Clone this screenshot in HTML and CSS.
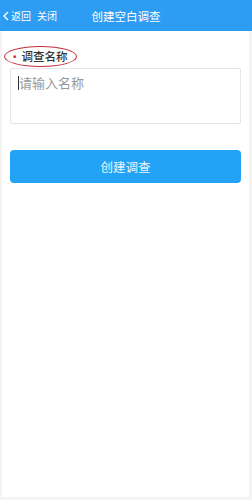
FILE: index.html
```html
<!DOCTYPE html>
<html lang="zh-CN">
  <head>
    <meta charset="UTF-8" />
    <title>创建空白调查</title>
    <link rel="stylesheet" href="styles.css">
  </head>
  <body>
    <div class="page">
      <!-- 顶部栏 -->
      <div class="topbar">
        <div class="nav-left">
          <svg class="back-icon" width="6" height="10" viewBox="0 0 6 10">
            <path d="M5 1 L1 5 L5 9" fill="none" stroke="#fff" stroke-width="1.4" />
          </svg>
          <span>返回</span>
          <span class="close">关闭</span>
        </div>
        <div class="title">创建空白调查</div>
      </div>

      <div class="form">
        <div class="label">
          <span class="dot">•</span>调查名称
        </div>
        <div class="name-box">
          <span class="caret"></span><span class="placeholder">请输入名称</span>
        </div>
        <button class="create-btn">创建调查</button>
      </div>
    </div>
  </body>
</html>
```

FILE: styles.css
```css
body {
  margin: 0;
  font-family: "Noto Sans CJK SC", "Noto Sans", sans-serif;
  background: #f4f4f4;
}

.page {
  margin: 0 3px 0 2px;
  height: 497px;
  background: #fff;
}

.topbar {
  height: 31px;
  background: #2c9df2;
  color: #fff;
  display: flex;
  align-items: center;
  position: relative;
  margin-left: -2px;
  margin-right: -3px;
}

.nav-left {
  display: flex;
  align-items: center;
  font-size: 10px;
  padding-left: 3px;
}

.back-icon {
  margin-right: 2px;
}

.close {
  margin-left: 6px;
}

.title {
  position: absolute;
  left: 0;
  right: 0;
  text-align: center;
  font-size: 11.5px;
  pointer-events: none;
}

.form {
  padding: 11px 8px 0 8px;
}

.label {
  font-size: 11.5px;
  font-weight: 500;
  color: #333;
  display: inline-block;
  line-height: 19px;
  padding: 0 8px 0 4px;
  margin-left: -6px;
  border: 1.5px solid #c0303c;
  border-radius: 50%;
}

.dot {
  color: #d03030;
  margin-right: 1px;
}

.name-box {
  margin-top: 1px;
  height: 56px;
  border: 1px solid #e6e6e6;
  border-radius: 2px;
  padding: 6px 7px;
  box-sizing: border-box;
  display: flex;
  align-items: flex-start;
}

.caret {
  width: 1px;
  height: 14px;
  background: #333;
  margin-top: 1px;
}

.placeholder {
  font-size: 13px;
  color: #999;
  line-height: 16px;
}

.create-btn {
  display: block;
  width: 100%;
  height: 33px;
  margin-top: 26px;
  border: none;
  border-radius: 4px;
  background: #23a3f5;
  color: #eaf6ff;
  font-family: "Noto Sans CJK SC", "Noto Sans", sans-serif;
  font-size: 12.5px;
}
```
